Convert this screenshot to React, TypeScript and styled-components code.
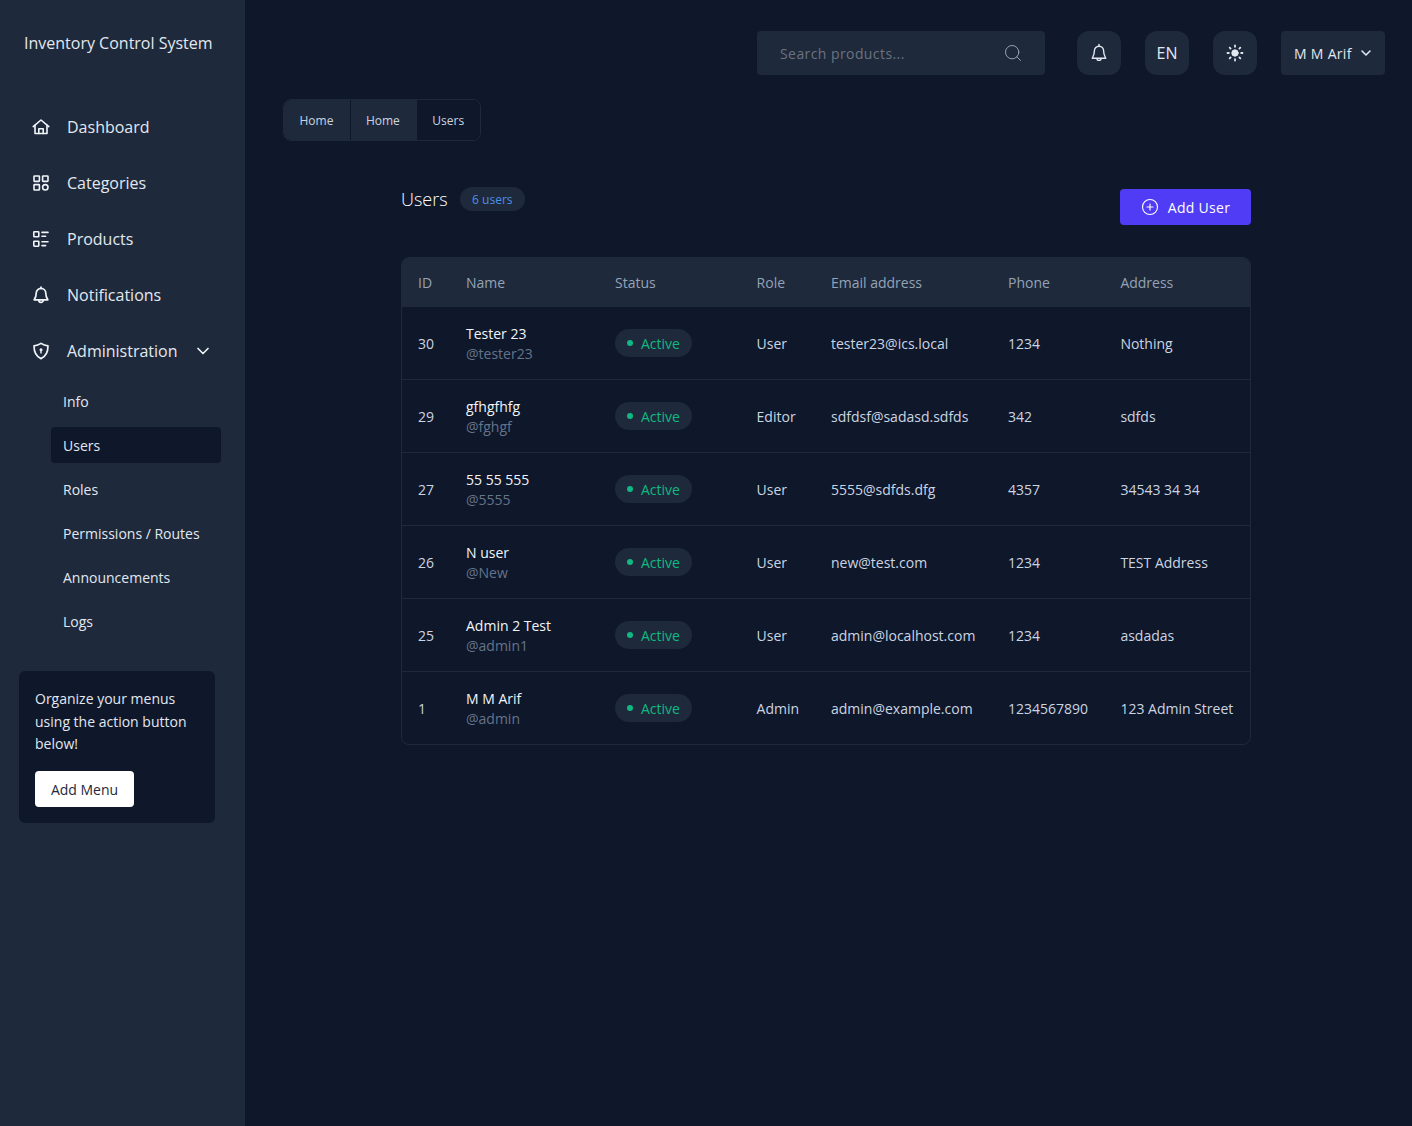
import React from "react";
import styled, { createGlobalStyle } from "styled-components";
import { ChevronDown, CirclePlus, Search } from "lucide-react";

type UserRow = {
  id: number;
  name: string;
  username: string;
  role: string;
  email: string;
  phone: string;
  address: string;
};

const users: UserRow[] = [
  { id: 30, name: "Tester 23", username: "@tester23", role: "User", email: "tester23@ics.local", phone: "1234", address: "Nothing" },
  { id: 29, name: "gfhgfhfg", username: "@fghgf", role: "Editor", email: "sdfdsf@sadasd.sdfds", phone: "342", address: "sdfds" },
  { id: 27, name: "55 55 555", username: "@5555", role: "User", email: "5555@sdfds.dfg", phone: "4357", address: "34543 34 34" },
  { id: 26, name: "N user", username: "@New", role: "User", email: "new@test.com", phone: "1234", address: "TEST Address" },
  { id: 25, name: "Admin 2 Test", username: "@admin1", role: "User", email: "admin@localhost.com", phone: "1234", address: "asdadas" },
  { id: 1, name: "M M Arif", username: "@admin", role: "Admin", email: "admin@example.com", phone: "1234567890", address: "123 Admin Street" },
];

const subMenu = ["Info", "Users", "Roles", "Permissions / Routes", "Announcements", "Logs"];

const columns = [
  { label: "ID", width: 48 },
  { label: "Name", width: 149 },
  { label: "Status", width: 141.6 },
  { label: "Role", width: 74.4 },
  { label: "Email address", width: 177 },
  { label: "Phone", width: 112.4 },
  { label: "Address", width: 145.6 },
];

const HomeIcon = () => (
  <svg width="20" height="20" viewBox="0 0 20 20" fill="none" stroke="currentColor" strokeWidth="1.6" strokeLinejoin="round" strokeLinecap="round">
    <path d="M2.2 9.6 10 3l7.8 6.6" />
    <path d="M4 8.4v8.1h12V8.4" />
    <path d="M7.8 16.5v-4.8h4.4v4.8" />
  </svg>
);

const GridIcon = () => (
  <svg width="20" height="20" viewBox="0 0 20 20" fill="none" stroke="currentColor" strokeWidth="1.6">
    <rect x="3" y="3" width="5.4" height="5.4" rx="0.6" />
    <rect x="11.6" y="3" width="5.4" height="5.4" rx="0.6" />
    <rect x="3" y="11.6" width="5.4" height="5.4" rx="0.6" />
    <circle cx="14.3" cy="14.3" r="2.7" />
  </svg>
);

const ListIcon = () => (
  <svg width="20" height="20" viewBox="0 0 20 20" fill="none" stroke="currentColor" strokeWidth="1.6" strokeLinecap="round">
    <rect x="2.8" y="2.8" width="5" height="5" rx="0.6" />
    <rect x="2.8" y="12.2" width="5" height="5" rx="0.6" />
    <path d="M11 3.4h6M11 7.2h3.6M11 12.8h6M11 16.6h3.6" />
  </svg>
);

const BellIcon = () => (
  <svg width="20" height="20" viewBox="0 0 20 20" fill="none" stroke="currentColor" strokeWidth="1.7" strokeLinejoin="round" strokeLinecap="round">
    <path d="M10 3.4a4.8 4.8 0 0 0-4.8 4.8c0 4.3-2 6-2 6.6h13.6c0-.6-2-2.3-2-6.6A4.8 4.8 0 0 0 10 3.4Z" />
    <path d="M10 2v1.4M7.8 15.2a2.2 2.2 0 0 0 4.4 0" />
  </svg>
);

const TopBellIcon = () => (
  <svg width="20" height="20" viewBox="0 0 20 20" fill="none" stroke="currentColor" strokeWidth="1.4" strokeLinejoin="round" strokeLinecap="round">
    <path d="M10 3.2a4.6 4.6 0 0 0-4.6 4.6c0 4.6-2.1 6.5-2.1 7.5h13.4c0-1-2.1-2.9-2.1-7.5A4.6 4.6 0 0 0 10 3.2Z" />
    <path d="M10 1.5v1.7M8 15.4a2 2 0 0 0 4 0" />
  </svg>
);

const ShieldIcon = () => (
  <svg width="20" height="20" viewBox="0 0 20 20" fill="none" stroke="currentColor" strokeWidth="1.7" strokeLinejoin="round">
    <path d="M10 2.4c2.2 1.5 4.4 2.2 7 2.4 0 6.4-1.8 10.6-7 12.8C4.8 15.4 3 11.2 3 4.8c2.6-.2 4.8-.9 7-2.4Z" />
    <circle cx="10" cy="8.8" r="1.5" fill="currentColor" stroke="none" />
    <path d="M10 9.5v3" strokeWidth="1.4" />
  </svg>
);

const SunIcon = () => (
  <svg width="18" height="18" viewBox="0 0 18 18" fill="currentColor" stroke="currentColor" strokeWidth="1.8" strokeLinecap="round">
    <circle cx="9" cy="9" r="3.2" strokeWidth="1" />
    <path d="M9 1.5v1.3M9 15.2v1.3M1.5 9h1.3M15.2 9h1.3M3.7 3.7l.9.9M13.4 13.4l.9.9M3.7 14.3l.9-.9M13.4 4.6l.9-.9" />
  </svg>
);

const navItems = [
  { label: "Dashboard", icon: <HomeIcon /> },
  { label: "Categories", icon: <GridIcon /> },
  { label: "Products", icon: <ListIcon /> },
  { label: "Notifications", icon: <BellIcon /> },
];

const GlobalStyle = createGlobalStyle`
  html, body {
    margin: 0;
    padding: 0;
    background: #0f172a;
  }
  body {
    font-family: "Open Sans", "Noto Sans", sans-serif;
    color: #e2e8f0;
  }
  * {
    box-sizing: border-box;
  }
`;

const Page = styled.div`
  display: flex;
  min-height: 1126px;
  background: #0f172a;
`;

const Sidebar = styled.aside`
  width: 245px;
  flex-shrink: 0;
  background: #1e293b;
  padding: 31px 24px 0 19px;
`;

const Brand = styled.div`
  font-size: 16px;
  line-height: 24px;
  color: #e2e8f0;
  padding-left: 5px;
  margin-bottom: 48px;
  white-space: nowrap;
`;

const NavList = styled.nav`
  display: flex;
  flex-direction: column;
  gap: 8px;
`;

const NavItem = styled.div`
  display: flex;
  align-items: center;
  height: 48px;
  padding-left: 12px;
  gap: 16px;
  font-size: 16px;
  color: #e2e8f0;
  svg {
    flex-shrink: 0;
    color: #f1f5f9;
  }
`;

const NavChevron = styled(ChevronDown)`
  margin-left: -1px;
`;

const SubList = styled.div`
  display: flex;
  flex-direction: column;
  gap: 8px;
  margin: 8px 0 0 32px;
`;

const SubItem = styled.div<{ $active?: boolean }>`
  height: 36px;
  display: flex;
  align-items: center;
  padding-left: 12px;
  border-radius: 4px;
  font-size: 14px;
  white-space: nowrap;
  color: #e2e8f0;
  background: ${(p) => (p.$active ? "#0f172a" : "transparent")};
`;

const PromoCard = styled.div`
  width: 196px;
  margin-top: 32px;
  padding: 17px 16px 16px;
  background: #0f172a;
  border-radius: 6px;
  font-size: 14px;
  line-height: 22.5px;
  color: #e2e8f0;
`;

const PromoButton = styled.button`
  display: block;
  margin-top: 15px;
  width: 99px;
  height: 36px;
  padding-top: 4px;
  background: #fff;
  border: 0;
  border-radius: 4px;
  font: inherit;
  line-height: 20px;
  color: #1e293b;
`;

const Main = styled.main`
  flex: 1;
  min-width: 0;
  padding: 31px 27px 0 38px;
`;

const TopBar = styled.header`
  display: flex;
  justify-content: flex-end;
  align-items: center;
  height: 44px;
`;

const SearchBox = styled.div`
  display: flex;
  align-items: center;
  justify-content: space-between;
  width: 288px;
  height: 44px;
  padding: 0 22px 0 23px;
  margin-right: 32px;
  background: #1e293b;
  border-radius: 4px;
  font-size: 14px;
  letter-spacing: 0.42px;
  color: #6b7280;
  svg {
    color: #94a3b8;
  }
`;

const RoundButton = styled.div`
  display: flex;
  align-items: center;
  justify-content: center;
  width: 44px;
  height: 44px;
  margin-right: 24px;
  background: #1e293b;
  border-radius: 12px;
  font-size: 16px;
  color: #e2e8f0;
`;

const UserButton = styled.div`
  display: flex;
  align-items: center;
  gap: 6px;
  width: 104px;
  height: 44px;
  padding-left: 13px;
  background: #1e293b;
  border-radius: 4px;
  font-size: 14px;
  letter-spacing: 0.3px;
  color: #e2e8f0;
`;

const Breadcrumb = styled.div`
  display: inline-flex;
  height: 42px;
  margin-top: 24px;
  border: 1px solid #1e293b;
  border-radius: 8px;
  overflow: hidden;
  vertical-align: top;
`;

const Crumb = styled.div<{ $current?: boolean }>`
  display: flex;
  align-items: center;
  padding: 0 ${(p) => (p.$current ? "15.5px" : "17px")} 0 15.5px;
  font-size: 12px;
  color: #cbd5e1;
  background: ${(p) => (p.$current ? "#0f172a" : "#1e293b")};
  &:nth-child(2) {
    box-shadow: inset 1px 0 0 #0f172a;
  }
`;

const Content = styled.section`
  width: 850px;
  margin: 48px 0 0 118px;
`;

const TitleRow = styled.div`
  display: flex;
  justify-content: space-between;
  align-items: flex-start;
  margin-bottom: 32px;
`;

const TitleGroup = styled.div`
  display: flex;
  align-items: center;
  gap: 12px;
  height: 24px;
  margin-top: -2px;
`;

const Title = styled.h1`
  margin: 0;
  font-size: 18px;
  font-weight: 300;
  line-height: 24px;
  color: #fff;
`;

const CountBadge = styled.span`
  display: flex;
  align-items: center;
  height: 24px;
  padding: 0 12.5px;
  background: #1e293b;
  border-radius: 12px;
  font-size: 12px;
  color: #4d8fe6;
`;

const AddButton = styled.button`
  display: flex;
  align-items: center;
  justify-content: center;
  gap: 9px;
  width: 131px;
  height: 36px;
  padding: 0;
  border: 0;
  border-radius: 4px;
  background: #503cf5;
  font: inherit;
  font-size: 14px;
  letter-spacing: 0.28px;
  color: #fff;
`;

const TableWrap = styled.div`
  border: 1px solid #1e293b;
  border-radius: 8px;
  overflow: hidden;
`;

const Table = styled.table`
  width: 848px;
  table-layout: fixed;
  border-collapse: separate;
  border-spacing: 0;
  font-size: 14px;
`;

const HeadRow = styled.tr`
  height: 48px;
  background: #1e293b;
`;

const HeadCell = styled.th`
  padding: 0 16px;
  text-align: left;
  font-weight: 400;
  color: #94a3b8;
  white-space: nowrap;
`;

const Row = styled.tr`
  height: 73px;
`;

const Cell = styled.td`
  padding: 0 0 0 16px;
  border-top: 1px solid #1e293b;
  color: #cbd5e1;
  white-space: nowrap;
`;

const NameCell = styled(Cell)`
  padding-top: 2px;
`;

const UserName = styled.div`
  line-height: 20px;
  color: #f1f5f9;
`;

const UserHandle = styled.div`
  line-height: 20px;
  color: #64748b;
`;

const StatusPill = styled.span`
  display: inline-flex;
  align-items: center;
  gap: 8px;
  height: 28px;
  padding: 0 12px;
  background: #1e293b;
  border-radius: 14px;
  color: #10b981;
`;

const StatusDot = styled.span`
  width: 6px;
  height: 6px;
  border-radius: 50%;
  background: #10b981;
`;

export default function App() {
  return (
    <Page>
      <GlobalStyle />
      <Sidebar>
        <Brand>Inventory Control System</Brand>
        <NavList>
          {navItems.map((item) => (
            <NavItem key={item.label}>
              {item.icon}
              {item.label}
            </NavItem>
          ))}
          <NavItem>
            <ShieldIcon />
            Administration
            <NavChevron size={20} />
          </NavItem>
        </NavList>
        <SubList>
          {subMenu.map((label) => (
            <SubItem key={label} $active={label === "Users"}>
              {label}
            </SubItem>
          ))}
        </SubList>
        <PromoCard>
          Organize your menus using the action button below!
          <PromoButton>Add Menu</PromoButton>
        </PromoCard>
      </Sidebar>
      <Main>
        <TopBar>
          <SearchBox>
            Search products...
            <Search size={20} strokeWidth={1.2} />
          </SearchBox>
          <RoundButton>
            <TopBellIcon />
          </RoundButton>
          <RoundButton>EN</RoundButton>
          <RoundButton>
            <SunIcon />
          </RoundButton>
          <UserButton>
            M M Arif
            <ChevronDown size={16} strokeWidth={2.4} />
          </UserButton>
        </TopBar>
        <Breadcrumb>
          <Crumb>Home</Crumb>
          <Crumb>Home</Crumb>
          <Crumb $current>Users</Crumb>
        </Breadcrumb>
        <Content>
          <TitleRow>
            <TitleGroup>
              <Title>Users</Title>
              <CountBadge>6 users</CountBadge>
            </TitleGroup>
            <AddButton>
              <CirclePlus size={18} strokeWidth={1.5} />
              Add User
            </AddButton>
          </TitleRow>
          <TableWrap>
            <Table>
              <colgroup>
                {columns.map((c) => (
                  <col key={c.label} width={c.width} />
                ))}
              </colgroup>
              <thead>
                <HeadRow>
                  {columns.map((c) => (
                    <HeadCell key={c.label}>{c.label}</HeadCell>
                  ))}
                </HeadRow>
              </thead>
              <tbody>
                {users.map((u) => (
                  <Row key={u.id}>
                    <Cell>{u.id}</Cell>
                    <NameCell>
                      <UserName>{u.name}</UserName>
                      <UserHandle>{u.username}</UserHandle>
                    </NameCell>
                    <Cell>
                      <StatusPill>
                        <StatusDot />
                        Active
                      </StatusPill>
                    </Cell>
                    <Cell>{u.role}</Cell>
                    <Cell>{u.email}</Cell>
                    <Cell>{u.phone}</Cell>
                    <Cell>{u.address}</Cell>
                  </Row>
                ))}
              </tbody>
            </Table>
          </TableWrap>
        </Content>
      </Main>
    </Page>
  );
}
